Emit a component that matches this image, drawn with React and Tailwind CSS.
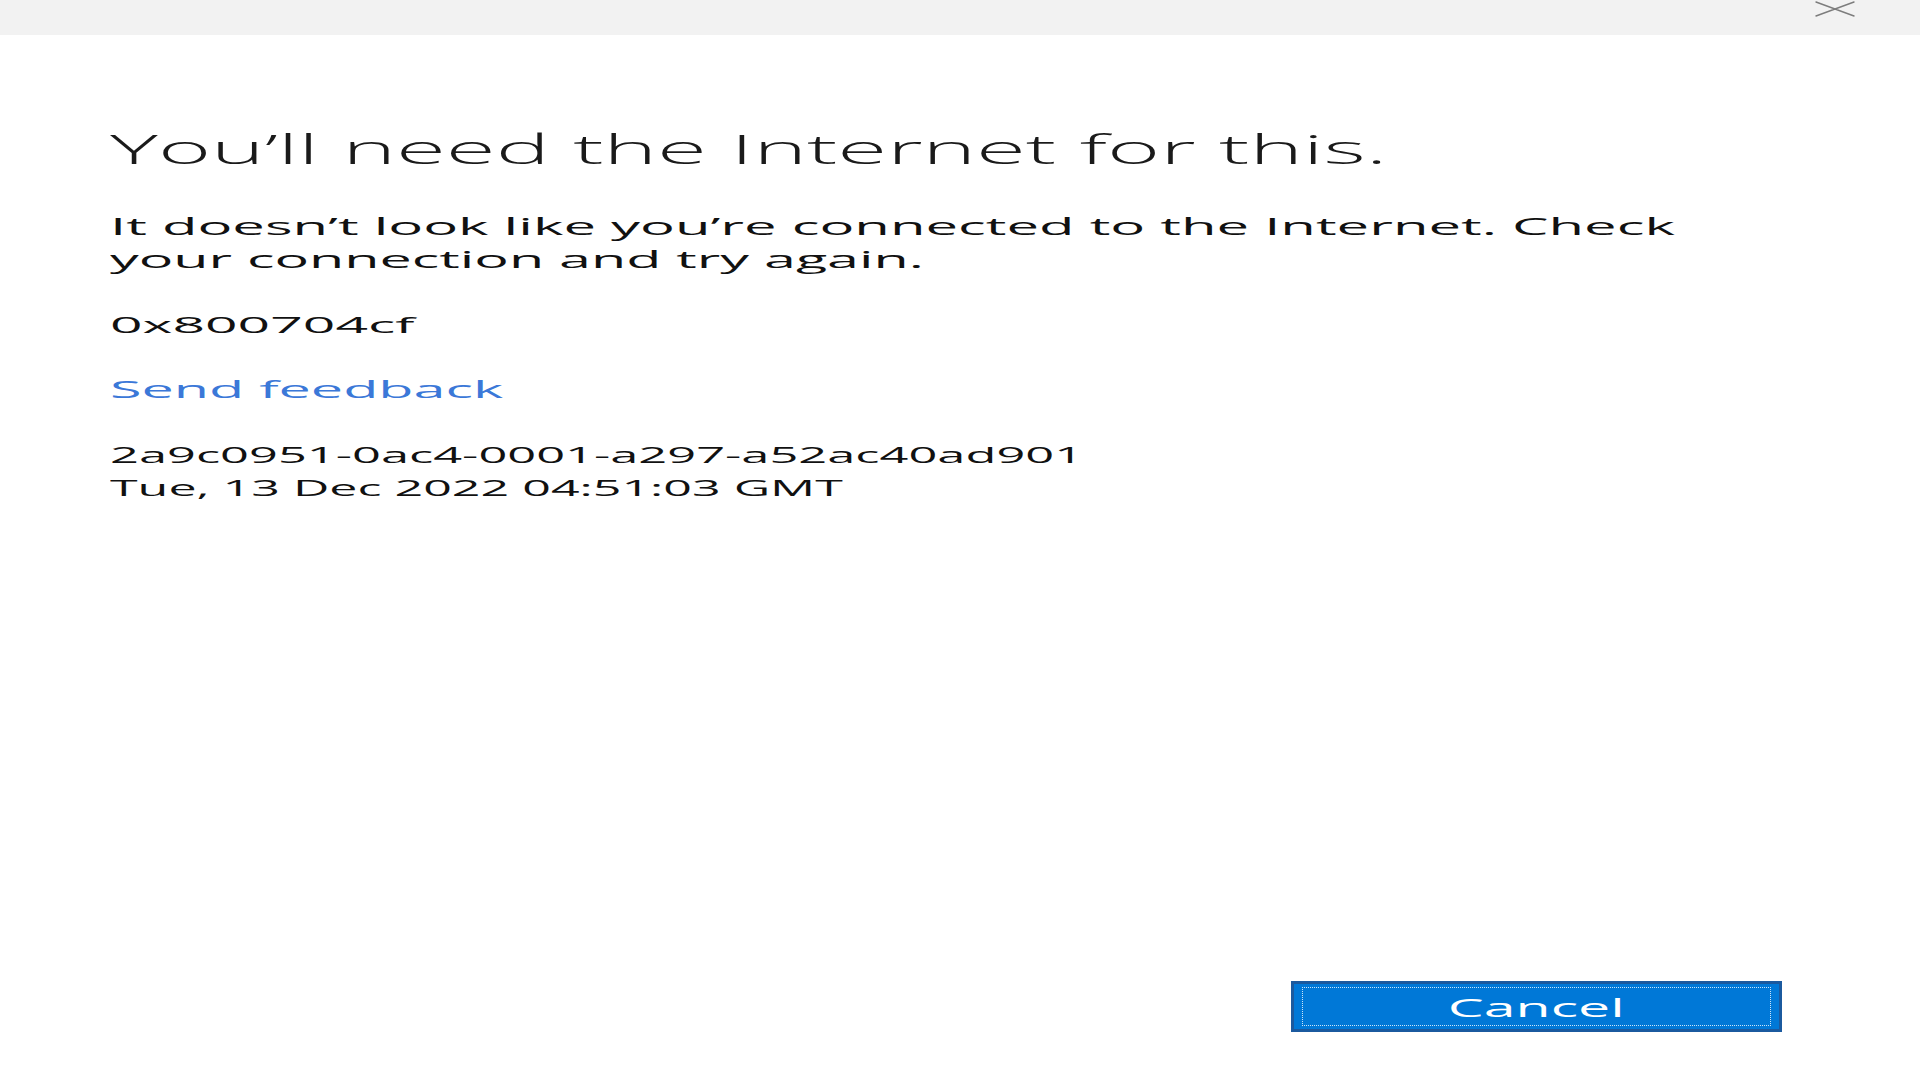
import React, { useLayoutEffect, useRef, useState } from 'react';

// Text in the capture is stretched sideways; fit each line to its measured width.
function Stretch({ width, center = false, children }) {
    const ref = useRef(null);
    const [scale, setScale] = useState(1);

    useLayoutEffect(() => {
        const fit = () => {
            if (ref.current && ref.current.offsetWidth) {
                setScale(width / ref.current.offsetWidth);
            }
        };
        fit();
        if (document.fonts) document.fonts.ready.then(fit);
    }, [width]);

    return (
        <span
            ref={ref}
            className={`inline-block whitespace-nowrap ${center ? 'origin-center' : 'origin-left'}`}
            style={{ transform: `scaleX(${scale})` }}
        >
            {children}
        </span>
    );
}

export default function App() {
    return (
        <div className="flex min-h-screen flex-col bg-white font-['Open_Sans','Noto_Sans',sans-serif] text-black">
            {/* Title bar */}
            <div className="flex h-[35px] shrink-0 items-start justify-end bg-[#f2f2f2] pr-[65px]">
                <svg width="40" height="18" viewBox="0 0 40 18" fill="none">
                    <path d="M1 2 L39 16 M1 16 L39 2" stroke="#7d7d7d" strokeWidth="1.4" strokeLinecap="round" />
                </svg>
            </div>

            {/* Message */}
            <div className="flex flex-col items-start pl-[110px]">
                <h1 className="mt-[90px] flex text-[40px] leading-[48px] font-light text-[#1a1a1a]">
                    <Stretch width={1277}>You’ll need the Internet for this.</Stretch>
                </h1>

                <div className="mt-[36px] flex flex-col items-start text-[24px] leading-[33px] font-medium text-[#111]">
                    <Stretch width={1566}>It doesn’t look like you’re connected to the Internet. Check</Stretch>
                    <Stretch width={814}>your connection and try again.</Stretch>
                </div>

                <div className="mt-[36px] flex text-[21px] leading-[28px] text-[#111]">
                    <Stretch width={304}>0x800704cf</Stretch>
                </div>

                <a className="mt-[35px] flex cursor-pointer text-[24px] leading-[30px] text-[#3b78d8]">
                    <Stretch width={393}>Send feedback</Stretch>
                </a>

                <div className="mt-[34px] flex flex-col items-start text-[22px] leading-[33px] text-[#111]">
                    <Stretch width={972}>2a9c0951-0ac4-0001-a297-a52ac40ad901</Stretch>
                    <Stretch width={734}>Tue, 13 Dec 2022 04:51:03 GMT</Stretch>
                </div>
            </div>

            {/* Footer */}
            <div className="mt-auto flex justify-end pr-[138px] pb-[48px]">
                <button className="h-[51px] w-[491px] border-[3px] border-[#1b5a9f] bg-[#0078d7] px-[8px] py-[3px]">
                    <div className="flex h-full w-full items-center justify-center border border-dotted border-white/80 text-[26px] leading-none text-white">
                        <Stretch width={176} center>Cancel</Stretch>
                    </div>
                </button>
            </div>
        </div>
    );
}
